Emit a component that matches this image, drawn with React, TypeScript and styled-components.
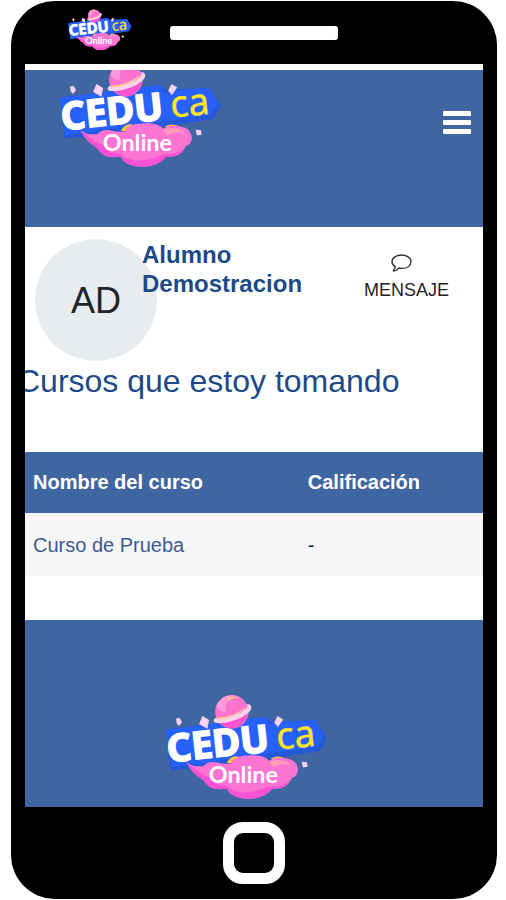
import React from "react";
import styled, { createGlobalStyle } from "styled-components";

const blue = "#3f66a0";
const navy = "#204a87";

const GlobalStyle = createGlobalStyle`
  *, *::before, *::after { box-sizing: border-box; }
  body {
    margin: 0;
    background: #ffffff;
    color: #212529;
    font-family: "Liberation Sans", Arial, sans-serif;
  }
`;

const Phone = styled.div`
  margin: 1px 9px 1px 11px;
  padding: 0 14px;
  background: #000000;
  border-radius: 44px;
`;

const TopBezel = styled.div`
  display: grid;
  grid-template-columns: 1fr 168px 1fr;
  align-items: center;
  height: 63px;
`;

const BezelLogo = styled.div`
  display: flex;
  padding: 0 0 6px 43px;
`;

const Speaker = styled.div`
  height: 14px;
  border-radius: 3px;
  background: #ffffff;
`;

const Screen = styled.div`
  overflow: hidden;
  padding-top: 6px;
  background: #ffffff;
`;

const Header = styled.header`
  display: flex;
  justify-content: space-between;
  align-items: flex-start;
  height: 157px;
  padding: 0 12px 0 34px;
  overflow: hidden;
  background: ${blue};
`;

const HeaderLogo = styled.a`
  display: flex;
  margin-top: -8px;
`;

const MenuButton = styled.button`
  display: flex;
  flex-direction: column;
  gap: 4px;
  width: 28px;
  margin-top: 41px;
  padding: 0;
  border: 0;
  background: none;
  cursor: pointer;
`;

const MenuBar = styled.span`
  width: 100%;
  height: 5px;
  border-radius: 1px;
  background: #ffffff;
`;

const Profile = styled.section`
  display: flex;
  align-items: flex-start;
  padding: 12px 34px 0 10px;
`;

const Avatar = styled.div`
  display: flex;
  flex: none;
  align-items: center;
  justify-content: center;
  width: 122px;
  height: 122px;
  padding-top: 2px;
  border-radius: 50%;
  background: #e9ecef;
  font-size: 36px;
`;

const StudentName = styled.h1`
  flex: 1;
  min-width: 0;
  margin: 1px 0 0 -15px;
  color: ${navy};
  font-size: 24px;
  font-weight: 700;
  line-height: 29px;
`;

const MessageButton = styled.button`
  display: flex;
  flex-direction: column;
  align-items: center;
  gap: 8px;
  margin-top: 15px;
  padding: 0;
  border: 0;
  background: none;
  color: #212529;
  font: 18px/20px "Liberation Sans", Arial, sans-serif;
  cursor: pointer;
`;

const IconSlot = styled.span`
  display: flex;
  width: 30px;
`;

const SectionTitle = styled.h2`
  margin: 2px 0 53px -8px;
  color: ${navy};
  font-size: 32px;
  font-weight: 400;
  line-height: 36px;
`;

const CourseTable = styled.table`
  width: 100%;
  margin-bottom: 44px;
  border-spacing: 0;
  table-layout: fixed;
  text-align: left;
  font-size: 20px;
  line-height: 24px;
`;

const HeadCell = styled.th<{ $width: string }>`
  width: ${(p) => p.$width};
  height: 61px;
  padding: 0 8px 2px;
  background: ${blue};
  color: #ffffff;
`;

const Cell = styled.td`
  height: 63px;
  padding: 0 8px;
  background: #f6f6f6;
`;

const CourseLink = styled.a`
  color: #3d5b92;
  text-decoration: none;
`;

const Footer = styled.footer`
  display: flex;
  justify-content: center;
  padding: 74px 16px 8px 0;
  background: ${blue};
`;

const BottomBezel = styled.div`
  display: flex;
  justify-content: center;
  padding: 15px 0;
`;

const HomeButton = styled.button`
  width: 62px;
  height: 62px;
  padding: 0;
  border: 11px solid #ffffff;
  border-radius: 20px;
  background: #000000;
  cursor: pointer;
`;

function Logo({ width }: { width: number }) {
  return (
    <svg width={width} viewBox="45 28 488 315" role="img" aria-label="CEDUca Online">
      <path d="M47 136 L62 133 L350 96 L362 110 L495 106 L530 160 L510 198 L360 222 L62 258 Z" fill="#2458d8" />
      <path d="M47 136 L350 96 L356 122 L388 112 L495 106 L521 152 L498 186 L64 248 Z" fill="#2860fa" />
      <circle cx="245" cy="81" r="50" fill="#fb72cf" />
      <path d="M200 65 Q212 28 252 32 Q220 52 228 80 Q209 86 200 65Z" fill="#ff9add" />
      <path d="M231 43 Q246 31 270 39 Q253 37 236 48Z" fill="#ffc078" />
      <path d="M203 96 Q255 104 292 73 L291 94 Q278 124 248 131 Q220 128 203 108Z" fill="#fa53cf" />
      <path d="M198 98 C180 111 196 119 228 113 C268 106 307 83 303 66 C301 56 289 58 289 61 C301 66 274 88 236 98 C217 103 199 105 198 98Z" fill="#fbd2ec" />
      <path d="M198 98 Q247 101 290 65 Q268 96 210 105Z" fill="#ffd095" />
      <g fill="#fad2f3">
        <path d="M78 101 L89 100 L96 112 L87 124 L80 116Z" />
        <path d="M157 94 L177 106 L172 132 L147 118Z" />
        <path d="M382 94 L399 104 L383 127 L372 113Z" />
        <path d="M454 231 L470 232 L472 245 L458 248Z" />
      </g>
      <path d="M230 234 Q247 203 276 221 L284 240 Z M362 221 Q388 207 407 225 L390 240Z" fill="#ffc22e" />
      <path d="M110 232 Q127 247 160 244 Q174 227 202 233 Q223 239 243 235 Q252 212 294 212 Q342 209 357 228 Q381 213 410 221 Q443 226 443 258 Q438 278 425 279 Q413 315 366 311 Q343 342 291 342 Q244 340 229 311 Q180 321 160 286 Q123 264 110 232Z" fill="#fc75d3" />
      <path d="M110 232 Q146 266 180 278 Q188 301 230 302 Q258 335 328 316 Q349 303 379 304 Q415 300 425 279 Q413 315 366 311 Q343 342 291 342 Q244 340 229 311 Q180 321 160 286 Q123 264 110 232Z" fill="#fa51d5" />
      <path d="M355 231 Q404 216 423 244 Q397 230 371 248Z" fill="#ff9ab9" />
      <text transform="translate(55 232) rotate(-6)" fill="#ffffff" stroke="#ffffff" strokeWidth="5" fontFamily="Noto Sans, Open Sans, sans-serif" fontWeight="700" fontSize="114">CEDU</text>
      <text transform="translate(382 195) rotate(-6)" fill="#ffe51f" stroke="#ffe51f" strokeWidth="1" fontFamily="Noto Sans, Open Sans, sans-serif" fontSize="112">ca</text>
      <text x="176" y="295" fill="#ffffff" fontFamily="Lato, sans-serif" fontWeight="700" fontSize="70">Online</text>
    </svg>
  );
}

function CommentIcon() {
  return (
    <svg width="21" height="18" viewBox="0 0 63 54" fill="none" stroke="#333333" strokeWidth="4" strokeLinejoin="round" aria-hidden="true">
      <path d="M32 3 C47 3 60 11 60 23 C60 36 48 43 32 43 C28 43 26 43 23 42 C19 48 13 51 7 51 C10 47 13 43 13 38 C6 34 3 29 3 23 C3 11 16 3 32 3Z" />
    </svg>
  );
}

const courses = [{ name: "Curso de Prueba", grade: "-" }];

export default function App() {
  return (
    <>
      <GlobalStyle />
      <Phone>
        <TopBezel>
          <BezelLogo>
            <Logo width={64} />
          </BezelLogo>
          <Speaker />
        </TopBezel>
        <Screen>
          <Header>
            <HeaderLogo href="#">
              <Logo width={163} />
            </HeaderLogo>
            <MenuButton aria-label="Menú">
              <MenuBar />
              <MenuBar />
              <MenuBar />
            </MenuButton>
          </Header>
          <main>
            <Profile>
              <Avatar>AD</Avatar>
              <StudentName>Alumno Demostracion</StudentName>
              <MessageButton>
                <IconSlot>
                  <CommentIcon />
                </IconSlot>
                MENSAJE
              </MessageButton>
            </Profile>
            <SectionTitle>Cursos que estoy tomando</SectionTitle>
            <CourseTable>
              <thead>
                <tr>
                  <HeadCell scope="col" $width="60%">Nombre del curso</HeadCell>
                  <HeadCell scope="col" $width="40%">Calificación</HeadCell>
                </tr>
              </thead>
              <tbody>
                {courses.map((course) => (
                  <tr key={course.name}>
                    <Cell>
                      <CourseLink href="#">{course.name}</CourseLink>
                    </Cell>
                    <Cell>{course.grade}</Cell>
                  </tr>
                ))}
              </tbody>
            </CourseTable>
          </main>
          <Footer>
            <Logo width={163} />
          </Footer>
        </Screen>
        <BottomBezel>
          <HomeButton aria-label="Inicio" />
        </BottomBezel>
      </Phone>
    </>
  );
}
